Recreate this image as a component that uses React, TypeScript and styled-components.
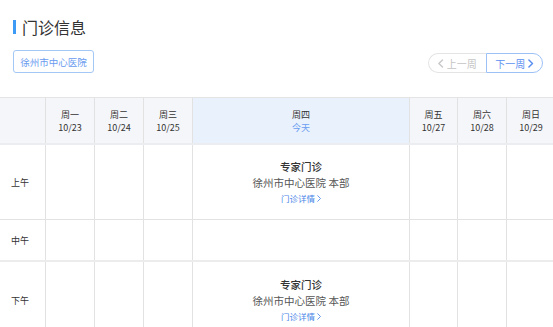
import React from 'react';
import styled, { createGlobalStyle } from 'styled-components';

const GlobalStyle = createGlobalStyle`
  html, body {
    margin: 0;
    padding: 0;
    background: #fff;
    font-family: "Noto Sans CJK SC", "Noto Sans", "Liberation Sans", sans-serif;
    color: #333;
  }
`;

const COLS = '45px 49px 49px 49px 217px 48px 49px 49px';

const Page = styled.div`
  width: 553px;
  height: 327px;
  overflow: hidden;
  padding-top: 18px;
  box-sizing: border-box;
`;

const Title = styled.h2`
  display: flex;
  align-items: center;
  gap: 6px;
  margin: 0 0 0 13px;
  height: 18px;
  font-size: 16px;
  font-weight: 400;
  line-height: 18px;
  color: #333;

  &::before {
    content: '';
    width: 3px;
    height: 14px;
    background: #3d9bf5;
  }
`;

const Toolbar = styled.div`
  display: flex;
  justify-content: space-between;
  align-items: flex-end;
  margin-top: 14px;
  padding: 0 10px 0 13px;
`;

const HospitalButton = styled.button`
  height: 23px;
  width: 81px;
  padding: 0;
  border: 1px solid #a4c8f6;
  border-radius: 3px;
  background: #fff;
  color: #6a9bef;
  font-family: inherit;
  font-size: 9.5px;
`;

const Pager = styled.div`
  display: flex;
  height: 20px;
`;

const PageButton = styled.button<{ $side: 'left' | 'right'; $active?: boolean }>`
  display: flex;
  align-items: center;
  justify-content: center;
  gap: 3px;
  width: ${(p) => (p.$side === 'left' ? 58 : 57)}px;
  height: 20px;
  padding: 0;
  background: #fff;
  font-family: inherit;
  font-size: 10px;
  color: ${(p) => (p.$active ? '#5a8ff0' : '#c4c4c4')};
  border: 1px solid ${(p) => (p.$active ? '#9cc1f7' : '#e4e4e4')};
  border-radius: ${(p) => (p.$side === 'left' ? '10px 0 0 10px' : '0 10px 10px 0')};
  ${(p) => (p.$side === 'left' ? 'border-right: none;' : '')}
`;

const Table = styled.div`
  margin-top: 24px;
  width: 555px;
  border-top: 1px solid #e4e4e4;
`;

const Row = styled.div<{ $height: number; $divider: number; $divColor: string }>`
  display: grid;
  grid-template-columns: ${COLS};
  height: ${(p) => p.$height}px;
  border-bottom: ${(p) => p.$divider}px solid ${(p) => p.$divColor};
`;

const HeadCell = styled.div<{ $today?: boolean }>`
  display: flex;
  flex-direction: column;
  align-items: center;
  justify-content: center;
  font-size: 9px;
  line-height: 13px;
  color: #333;
  background: ${(p) => (p.$today ? '#e9f1fd' : '#f5f6fa')};
  & + & {
    border-left: 1px solid #e2e2e2;
  }
`;

const Sub = styled.span<{ $today?: boolean }>`
  color: ${(p) => (p.$today ? '#6b9df0' : '#333')};
`;

const LabelCell = styled.div`
  display: flex;
  align-items: center;
  padding-left: 11px;
  font-size: 9px;
  color: #333;
`;

const Cell = styled.div`
  display: flex;
  flex-direction: column;
  align-items: center;
  justify-content: center;
  border-left: 1px solid #e2e2e2;
`;

const SlotName = styled.div`
  font-size: 10.5px;
  font-weight: 500;
  line-height: 16px;
  color: #333;
`;

const SlotPlace = styled.div`
  font-size: 10.5px;
  line-height: 16px;
  color: #555;
`;

const SlotLink = styled.a`
  display: flex;
  align-items: center;
  gap: 2px;
  font-size: 8.5px;
  line-height: 15px;
  color: #4a86e8;
  text-decoration: none;
`;

const Chevron = ({ dir, size = 8, color, weight = 1.2 }: { dir: 'left' | 'right'; size?: number; color: string; weight?: number }) => (
  <svg width={size * 0.6} height={size} viewBox="0 0 6 10" fill="none">
    <path
      d={dir === 'left' ? 'M5 1 L1 5 L5 9' : 'M1 1 L5 5 L1 9'}
      stroke={color}
      strokeWidth={weight}
      strokeLinecap="round"
      strokeLinejoin="round"
    />
  </svg>
);

const days = [
  { name: '周一', date: '10/23' },
  { name: '周二', date: '10/24' },
  { name: '周三', date: '10/25' },
  { name: '周四', date: '今天', today: true },
  { name: '周五', date: '10/27' },
  { name: '周六', date: '10/28' },
  { name: '周日', date: '10/29' },
];

const slots = [
  { label: '上午', height: 74, divider: 1, color: '#e2e2e2', clinic: true },
  { label: '中午', height: 40, divider: 2, color: '#ececec', clinic: false },
  { label: '下午', height: 76, divider: 1, color: '#e2e2e2', clinic: true },
];

const Clinic = () => (
  <>
    <SlotName>专家门诊</SlotName>
    <SlotPlace>徐州市中心医院 本部</SlotPlace>
    <SlotLink href="#">
      门诊详情
      <Chevron dir="right" size={7} color="#4a86e8" />
    </SlotLink>
  </>
);

export default function App() {
  return (
    <Page>
      <GlobalStyle />
      <Title>门诊信息</Title>
      <Toolbar>
        <HospitalButton>徐州市中心医院</HospitalButton>
        <Pager>
          <PageButton $side="left">
            <Chevron dir="left" size={9} weight={1.6} color="#c8c8c8" />
            上一周
          </PageButton>
          <PageButton $side="right" $active>
            下一周
            <Chevron dir="right" size={9} weight={1.6} color="#5a8ff0" />
          </PageButton>
        </Pager>
      </Toolbar>
      <Table>
        <Row $height={45} $divider={2} $divColor="#ebedf0">
          <HeadCell />
          {days.map((d) => (
            <HeadCell key={d.name} $today={d.today}>
              <span>{d.name}</span>
              <Sub $today={d.today}>{d.date}</Sub>
            </HeadCell>
          ))}
        </Row>
        {slots.map((s) => (
          <Row key={s.label} $height={s.height} $divider={s.divider} $divColor={s.color}>
            <LabelCell>{s.label}</LabelCell>
            {days.map((d) => (
              <Cell key={d.name}>{s.clinic && d.today && <Clinic />}</Cell>
            ))}
          </Row>
        ))}
      </Table>
    </Page>
  );
}
